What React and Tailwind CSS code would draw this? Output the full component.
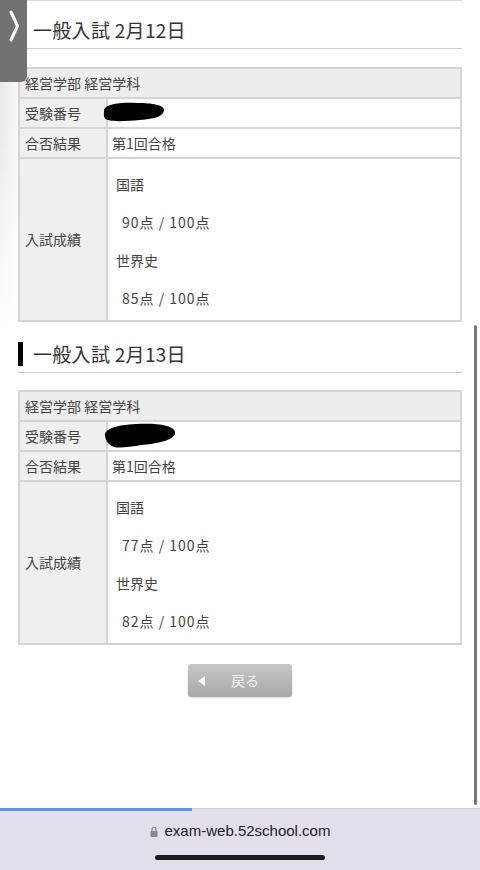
import React from "react"

const exams = [
    {
        title: "一般入試 2月12日",
        blob: "M4 10 C4 3 20 1 38 2 C52 2 64 4 64 9 C64 15 55 18 40 19 C28 20 14 21 8 19 C3 18 4 14 4 10 Z",
        blobW: 66,
        blobH: 22,
        blobX: 100,
        blobY: 2,
        scores: [
            { subject: "国語", score: "90点 / 100点" },
            { subject: "世界史", score: "85点 / 100点" },
        ],
    },
    {
        title: "一般入試 2月13日",
        blob: "M3 14 C2 7 14 3 34 2 C54 1 72 3 73 10 C74 17 60 21 40 23 C26 25 14 27 10 24 C6 22 4 19 3 14 Z",
        blobW: 76,
        blobH: 28,
        blobX: 102,
        blobY: 0,
        scores: [
            { subject: "国語", score: "77点 / 100点" },
            { subject: "世界史", score: "82点 / 100点" },
        ],
    },
]

function ExamHeading({ title, first }) {
    return (
        <div className={`${first ? "mt-[17px]" : "mt-[20px]"} flex items-center border-b border-[#cfcfcf] pb-[6px]`}>
            <div className="h-[24px] w-[5px] shrink-0 bg-black" />
            <h2 className="ml-[10px] text-[19px] leading-[24px] tracking-[0.3px] text-[#333]">{title}</h2>
        </div>
    )
}

function ExamTable({ exam, first }) {
    return (
        <div className={`${first ? "mt-[18px]" : "mt-[17px]"} border-2 border-[#d4d4d4] text-[14px] text-[#444]`}>
            <div className="flex h-[28px] items-center bg-[#ededed] pl-[5px]">経営学部 経営学科</div>
            <div className="relative flex h-[30px] border-t-2 border-[#d4d4d4]">
                <div className="flex w-[88px] shrink-0 items-center border-r-2 border-[#d4d4d4] bg-[#efefef] pl-[5px]">受験番号</div>
                <div className="flex-1 bg-white" />
                <svg
                    className="absolute"
                    style={{ left: exam.blobX - 20, top: exam.blobY }}
                    width={exam.blobW}
                    height={exam.blobH}
                    viewBox={`0 0 ${exam.blobW} ${exam.blobH}`}
                >
                    <path d={exam.blob} fill="#000" />
                </svg>
            </div>
            <div className="flex h-[30px] border-t-2 border-[#d4d4d4]">
                <div className="flex w-[88px] shrink-0 items-center border-r-2 border-[#d4d4d4] bg-[#efefef] pl-[5px]">合否結果</div>
                <div className="flex flex-1 items-center bg-white pl-[4px]">第1回合格</div>
            </div>
            <div className="flex h-[163px] border-t-2 border-[#d4d4d4]">
                <div className="flex w-[88px] shrink-0 items-center border-r-2 border-[#d4d4d4] bg-[#efefef] pl-[5px]">入試成績</div>
                <div className="flex-1 bg-white pl-[8px] pt-[6px]">
                    {exam.scores.map((s) => (
                        <div key={s.subject}>
                            <div className="leading-[38px]">{s.subject}</div>
                            <div className="pl-[6px] leading-[38px] tracking-[1px]">{s.score}</div>
                        </div>
                    ))}
                </div>
            </div>
        </div>
    )
}

export default function App() {
    return (
        <div
            className="flex h-[870px] w-[480px] flex-col overflow-hidden bg-white"
            style={{ fontFamily: '"Noto Sans CJK JP", "Noto Sans", sans-serif' }}
        >
            <div className="relative flex-1 overflow-hidden">
                {/* faint shade on the left edge */}
                <div className="absolute left-0 top-0 h-[330px] w-[26px] bg-gradient-to-r from-[#e9e9e9] to-transparent [mask-image:linear-gradient(to_bottom,black_40%,transparent)]" />

                <div className="relative mx-[18px] border-t border-[#dcdcdc]">
                    {exams.map((exam, i) => (
                        <div key={exam.title}>
                            <ExamHeading title={exam.title} first={i === 0} />
                            <ExamTable exam={exam} first={i === 0} />
                        </div>
                    ))}

                    <div className="mt-[19px] flex justify-center">
                        <button className="relative flex h-[33px] w-[104px] items-center justify-center rounded-[3px] bg-gradient-to-b from-[#c6c6c6] to-[#a8a8a8] text-[14px] text-[#f2f2f2] shadow-[0_1px_2px_rgba(0,0,0,0.15)]">
                            <span className="absolute left-[10px] top-[12px] h-0 w-0 border-y-[5px] border-r-[7px] border-y-transparent border-r-white" />
                            <span className="ml-[10px]">戻る</span>
                        </button>
                    </div>
                </div>

                {/* side tab */}
                <div className="absolute left-0 top-0 flex h-[82px] w-[27px] justify-center rounded-br-[6px] bg-[#727272] pt-[10px]">
                    <svg width="12" height="32" viewBox="0 0 12 32">
                        <path d="M3 2 L9.5 16 L3 30" fill="none" stroke="#fff" strokeWidth="3" strokeLinecap="round" strokeLinejoin="round" />
                    </svg>
                </div>

                {/* scrollbar */}
                <div className="absolute right-[3px] top-[325px] h-[480px] w-[3px] rounded-full bg-[#777]" />
            </div>

            <div className="relative h-[62px] border-t border-[#cfcfcf] bg-[#e3dfea]">
                <div className="absolute left-0 top-[-1px] h-[3px] w-[192px] bg-[#5b93ee]" />
                <div className="flex justify-center pt-[13px]">
                    <div className="flex items-center gap-[7px] text-[15px] leading-[18px] text-[#222]" style={{ fontFamily: '"Liberation Sans", Arial, sans-serif' }}>
                        <svg width="8" height="11" viewBox="0 0 8 11">
                            <path d="M2 5 V3.3 A2 2 0 0 1 6 3.3 V5" fill="none" stroke="#8a8a8e" strokeWidth="1.3" />
                            <rect x="0.5" y="5" width="7" height="6" rx="1" fill="#8a8a8e" />
                        </svg>
                        <span>exam-web.52school.com</span>
                    </div>
                </div>
                <div className="mx-auto mt-[15px] h-[5px] w-[170px] rounded-full bg-[#1c1c1e]" />
            </div>
        </div>
    )
}
